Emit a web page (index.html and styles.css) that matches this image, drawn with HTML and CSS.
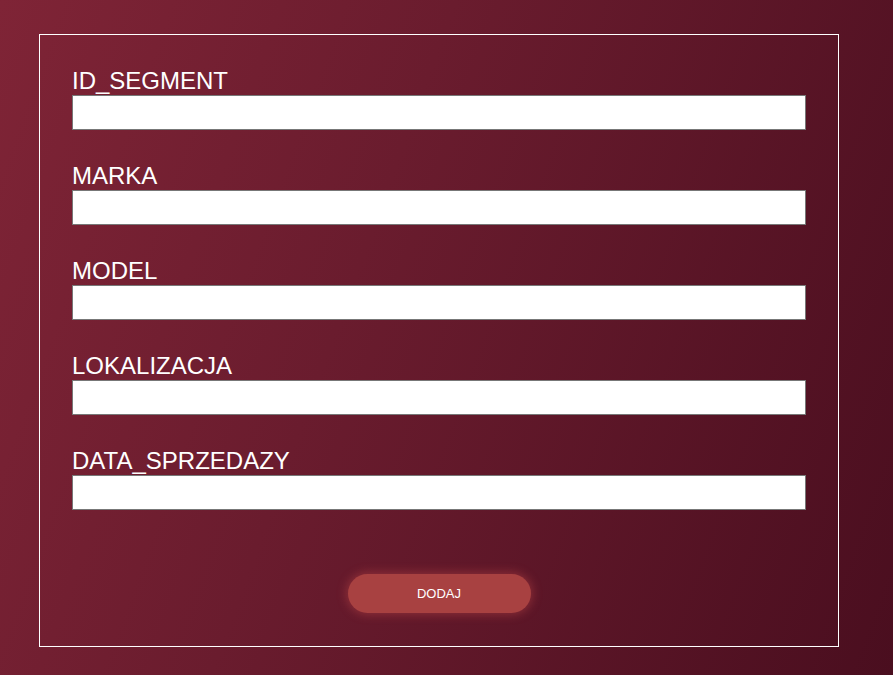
FILE: index.html
```html
<!DOCTYPE html>
<html lang="pl">
<head>
<meta charset="utf-8">
<title>Dodaj</title>
<link rel="stylesheet" href="styles.css">
</head>
<body>
<form class="panel">
  <div class="field"><label class="label">ID_SEGMENT</label><input class="input" type="text"></div>
  <div class="field"><label class="label">MARKA</label><input class="input" type="text"></div>
  <div class="field"><label class="label">MODEL</label><input class="input" type="text"></div>
  <div class="field"><label class="label">LOKALIZACJA</label><input class="input" type="text"></div>
  <div class="field"><label class="label">DATA_SPRZEDAZY</label><input class="input" type="text"></div>
  <div class="actions"><button class="btn" type="button">DODAJ</button></div>
</form>
</body>
</html>
```
FILE: styles.css
```css
html, body {
  margin: 0;
  height: 100%;
}
body {
  background: linear-gradient(110deg, #7f2436 0%, #6a1c2e 40%, #4a0e1f 100%);
  font-family: "Liberation Sans", Arial, sans-serif;
  padding: 34px 0 0 39px;
  box-sizing: border-box;
  overflow: hidden;
}
.panel {
  width: 800px;
  box-sizing: border-box;
  border: 1px solid #ffffff;
  padding: 33px 32px 33px;
  margin: 0;
}
.field {
  display: flex;
  flex-direction: column;
  margin-bottom: 33px;
}
.label {
  color: #ffffff;
  font-size: 24px;
  line-height: 25px;
  margin-bottom: 2px;
}
.input {
  height: 35px;
  box-sizing: border-box;
  border: 1px solid #777777;
  background: #ffffff;
  margin: 0;
  padding: 2px 6px;
  font-size: 16px;
}
.actions {
  display: flex;
  justify-content: center;
  padding-top: 31px;
}
.btn {
  width: 183px;
  height: 39px;
  border: none;
  border-radius: 20px;
  background: #a84141;
  color: #ffffff;
  font-family: "Liberation Sans", Arial, sans-serif;
  font-size: 13px;
  box-shadow: 0 0 10px 2px rgba(190, 70, 70, 0.45);
  cursor: pointer;
}
```
